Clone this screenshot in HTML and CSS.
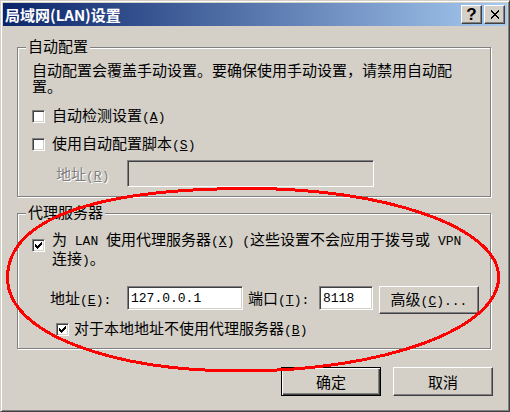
FILE: index.html
```html
<!DOCTYPE html>
<html lang="zh-CN">
<head>
    <meta charset="UTF-8">
    <meta name="viewport" content="width=device-width, initial-scale=1.0">
    <title>局域网(LAN)设置</title>
    <link rel="stylesheet" href="styles.css">
</head>
<body>
    <div class="window">
        <div class="titlebar">
            <span class="title">局域网(LAN)设置</span>
            <div class="title-buttons">
                <span class="tbtn">?</span>
                <span class="tbtn">
                    <svg width="10" height="9" viewBox="0 0 10 9"><path d="M1 0.5L9 8.5M9 0.5L1 8.5" stroke="#000" stroke-width="2" shape-rendering="crispEdges"/></svg>
                </span>
            </div>
        </div>

        <div class="content">
            <div class="group group-auto">
                <div class="group-title">自动配置</div>
                <p class="desc">自动配置会覆盖手动设置。要确保使用手动设置，请禁用自动配置。</p>
                <div class="opt opt-detect">
                    <span class="check"></span>
                    <span>自动检测设置<span class="en">(<u>A</u>)</span></span>
                </div>
                <div class="opt opt-script">
                    <span class="check"></span>
                    <span>使用自动配置脚本<span class="en">(<u>S</u>)</span></span>
                </div>
                <div class="addr-auto">
                    <span class="lbl disabled">地址<span class="en">(<u>R</u>)</span></span>
                    <input class="field field-auto" type="text" value="" disabled>
                </div>
            </div>

            <div class="group group-proxy">
                <div class="group-title">代理服务器</div>
                <div class="opt-lan">
                    <span class="check">
                        <svg width="11" height="11" viewBox="0 0 11 11"><path d="M2 4h1v3H2zM3 5h1v3H3zM4 6h1v3H4zM5 5h1v3H5zM6 4h1v3H6zM7 3h1v3H7zM8 2h1v3H8z" fill="#000"/></svg>
                    </span>
                    <span>为<span class="en"> LAN </span>使用代理服务器<span class="en">(<u>X</u>) (</span>这些设置不会应用于拨号或<span class="en"> VPN</span><br>连接<span class="en">)</span>。</span>
                </div>
                <div class="proxy-row">
                    <span class="lbl lbl-addr">地址<span class="en">(<u>E</u>):</span></span>
                    <input class="field field-addr" type="text" value="127.0.0.1">
                    <span class="lbl lbl-port">端口<span class="en">(<u>T</u>):</span></span>
                    <input class="field field-port" type="text" value="8118">
                    <button class="btn btn-adv">高级<span class="en">(<u>C</u>)...</span></button>
                </div>
                <div class="opt opt-bypass">
                    <span class="check">
                        <svg width="11" height="11" viewBox="0 0 11 11"><path d="M2 4h1v3H2zM3 5h1v3H3zM4 6h1v3H4zM5 5h1v3H5zM6 4h1v3H6zM7 3h1v3H7zM8 2h1v3H8z" fill="#000"/></svg>
                    </span>
                    <span>对于本地地址不使用代理服务器<span class="en">(<u>B</u>)</span></span>
                </div>
            </div>

            <div class="actions">
                <button class="btn btn-default">确定</button>
                <button class="btn">取消</button>
            </div>
        </div>
    </div>

    <!-- red mark drawn over the dialog -->
    <svg class="mark" width="510" height="412" viewBox="0 0 510 412">
        <path d="M7.5 278C7.5 219.8 92.4 188.5 250 188.5C387.4 188.5 498.7 228.1 498.7 277C498.7 328.9 383.3 371 241 371C112 371 7.5 333.8 7.5 278Z" fill="none" stroke="#ff0000" stroke-width="3" shape-rendering="crispEdges"/>
    </svg>
</body>
</html>
```

FILE: styles.css
```css
body {
    margin: 0;
    position: relative;
    font-family: "Noto Sans CJK SC", sans-serif;
    font-size: 15px;
    color: #000;
    background: #d4d0c8;
}
.en {
    font-family: "Liberation Mono", monospace;
    font-size: 13px;
    white-space: pre;
}
.window {
    width: 510px;
    height: 412px;
    box-sizing: border-box;
    padding: 2px;
    border: 1px solid;
    border-color: #d4d0c8 #404040 #404040 #d4d0c8;
    box-shadow: inset 1px 1px #fff, inset -1px -1px #808080;
    background: #d4d0c8;
}
.titlebar {
    height: 23px;
    display: flex;
    align-items: center;
    justify-content: space-between;
    padding: 0 2px;
    background: linear-gradient(to right, #0a246a, #a6caf0);
    color: #fff;
}
.title {
    font-weight: bold;
    font-size: 15px;
    line-height: 16px;
}
.title-buttons {
    display: flex;
    gap: 2px;
}
.tbtn {
    width: 21px;
    height: 19px;
    box-sizing: border-box;
    border: 1px solid;
    border-color: #fff #404040 #404040 #fff;
    box-shadow: inset -1px -1px #808080;
    background: #d4d0c8;
    color: #000;
    display: flex;
    align-items: center;
    justify-content: center;
    font: bold 17px "Liberation Sans", sans-serif;
}
.content {
    padding: 21px 16px 0 14px;
}

/* etched group boxes */
.group {
    position: relative;
    box-sizing: border-box;
    border: 1px solid #808080;
    box-shadow: 1px 1px #fff, inset 1px 1px #fff;
}
.group-title {
    position: absolute;
    top: -10px;
    left: 8px;
    padding: 0 2px;
    line-height: 16px;
    background: #d4d0c8;
}
.group-auto {
    height: 150px;
    padding: 14px 0 0 14px;
}
.group-proxy {
    height: 136px;
    margin-top: 16px;
    padding: 17px 0 0 14px;
}
.desc {
    margin: 0;
    line-height: 16px;
    max-width: 428px;
}

/* checkboxes */
.opt {
    display: flex;
    align-items: center;
    height: 19px;
    line-height: 16px;
}
.check {
    flex: none;
    width: 13px;
    height: 13px;
    box-sizing: border-box;
    margin-right: 7px;
    border: 1px solid;
    border-color: #808080 #fff #fff #808080;
    box-shadow: inset 1px 1px #404040, inset -1px -1px #d4d0c8;
    background: #fff;
}
.check svg {
    display: block;
}
.opt-detect {
    margin-top: 13px;
}
.opt-script {
    margin-top: 9px;
}
.opt-lan {
    display: flex;
    align-items: flex-start;
    line-height: 16px;
}
.opt-lan .check {
    margin-top: 8px;
}
.opt-bypass {
    height: 17px;
    margin-top: 7px;
    padding-left: 24px;
}
.opt-bypass .check {
    margin-right: 5px;
}

/* address rows */
.addr-auto {
    display: flex;
    align-items: center;
    margin-top: 6px;
    padding-left: 24px;
}
.lbl {
    flex: none;
}
.addr-auto .lbl {
    width: 71px;
}
.disabled {
    color: #808080;
    text-shadow: 1px 1px #fff;
}
.field {
    box-sizing: border-box;
    height: 24px;
    margin: 0;
    padding: 0 3px;
    border: 1px solid;
    border-color: #808080 #fff #fff #808080;
    box-shadow: inset 1px 1px #404040, inset -1px -1px #d4d0c8;
    background: #fff;
    color: #000;
    font: 13px "Liberation Mono", monospace;
    outline: none;
}
.field-auto {
    width: 247px;
    height: 27px;
    background: #d4d0c8;
}
.proxy-row {
    display: flex;
    align-items: flex-start;
    margin-top: 17px;
    padding-left: 18px;
    line-height: 24px;
}
.lbl-addr {
    width: 77px;
}
.field-addr {
    width: 116px;
}
.lbl-port {
    width: 71px;
    margin-left: 5px;
}
.field-port {
    width: 54px;
}

/* push buttons */
.btn {
    box-sizing: border-box;
    width: 100px;
    height: 28px;
    padding: 0;
    border: 1px solid;
    border-color: #fff #404040 #404040 #fff;
    box-shadow: inset -1px -1px #808080;
    background: #d4d0c8;
    color: #000;
    font: inherit;
    line-height: 16px;
}
.btn-adv {
    margin-left: 6px;
}
.btn-default {
    border-color: #000;
    box-shadow: inset 1px 1px #fff, inset -1px -1px #404040, inset -2px -2px #808080;
}
.actions {
    display: flex;
    justify-content: flex-end;
    gap: 12px;
    margin: 18px -2px 0 0;
}
.actions .btn {
    height: 29px;
}

.mark {
    position: absolute;
    top: 0;
    left: 0;
    pointer-events: none;
}
```
